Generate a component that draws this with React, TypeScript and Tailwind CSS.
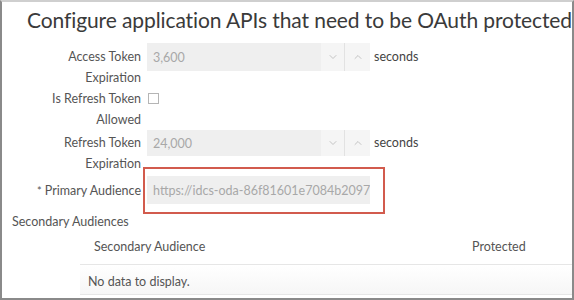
import React from 'react';
import { ChevronDown, ChevronUp } from 'lucide-react';

const font = { fontFamily: 'Lato, "Open Sans", sans-serif' };

const Spinner: React.FC<{ value: string; className?: string }> = ({ value, className }) => (
  <div className={`flex w-[223px] bg-[#efefef] ${className ?? ''}`}>
    <div className="flex-1 pl-[6px] flex items-center text-[#a8a8a8]">{value}</div>
    <div className="w-[24px] flex items-center justify-center bg-[#f5f5f5] border-r border-[#e2e2e2]">
      <ChevronDown className="h-3 w-3 text-[#c4c4c4]" strokeWidth={2} />
    </div>
    <div className="w-[25px] flex items-center justify-center bg-[#f5f5f5]">
      <ChevronUp className="h-3 w-3 text-[#c4c4c4]" strokeWidth={2} />
    </div>
  </div>
);

export default function App() {
  return (
    <div
      className="relative w-[574px] h-[300px] overflow-hidden bg-white border-2 border-[#8a8a8a] border-t-[#cfcfcf] text-[#555]"
      style={font}
    >
      {/* Title */}
      <h1 className="pl-[25px] pt-[3px] text-[21px] tracking-[-0.1px] leading-[30px] text-[#3a3a3a] whitespace-nowrap">
        Configure application APIs that need to be OAuth protected
      </h1>

      {/* Form */}
      <div className="mt-[8px] text-[12.5px] leading-[21px]">
        <div className="flex gap-[6px]">
          <div className="w-[139px] text-right pt-[3px]">Access Token<br />Expiration</div>
          <Spinner value="3,600" className="h-[28px]" />
          <div className="ml-[-2px] pt-[3px] text-[#444]">seconds</div>
        </div>
        <div className="flex gap-[7px]">
          <div className="w-[139px] text-right">Is Refresh Token<br />Allowed</div>
          <div className="mt-[5px] h-[11px] w-[11px] border border-[#b5b5b5] bg-white" />
        </div>
        <div className="flex gap-[6px]">
          <div className="w-[139px] text-right pt-[2px]">Refresh Token<br />Expiration</div>
          <Spinner value="24,000" className="h-[26px]" />
          <div className="ml-[-2px] pt-[2px] text-[#444]">seconds</div>
        </div>
        <div className="flex gap-[6px] items-start">
          <div className="w-[139px] text-right pt-[6px]">
            <span className="align-top text-[11px] mr-[3px]">*</span>Primary Audience
          </div>
          <div className="mt-[2px] w-[223px] h-[28px] bg-[#efefef] pl-[6px] flex items-center text-[#a8a8a8] overflow-hidden whitespace-nowrap">
            https://idcs-oda-86f81601e7084b2097f
          </div>
        </div>
      </div>

      {/* Annotation */}
      <div className="absolute left-[141px] top-[165px] w-[242px] h-[47px] border-2 border-[#d25b4d]" />

      {/* Secondary audiences */}
      <div className="mt-[7px] pl-[10px] text-[12.5px] leading-[21px]">Secondary Audiences</div>
      <div className="ml-[78px] text-[12.5px] leading-[21px]">
        <div className="flex pt-[4px] pb-[7px] border-b border-[#e6e6e6]">
          <div className="pl-[14px] w-[392px]">Secondary Audience</div>
          <div>Protected</div>
        </div>
        <div className="pt-[6px] pb-[2px] pl-[8px] border-b border-[#e6e6e6] bg-gradient-to-b from-white to-[#f6f6f6]">
          No data to display.
        </div>
      </div>
    </div>
  );
}
